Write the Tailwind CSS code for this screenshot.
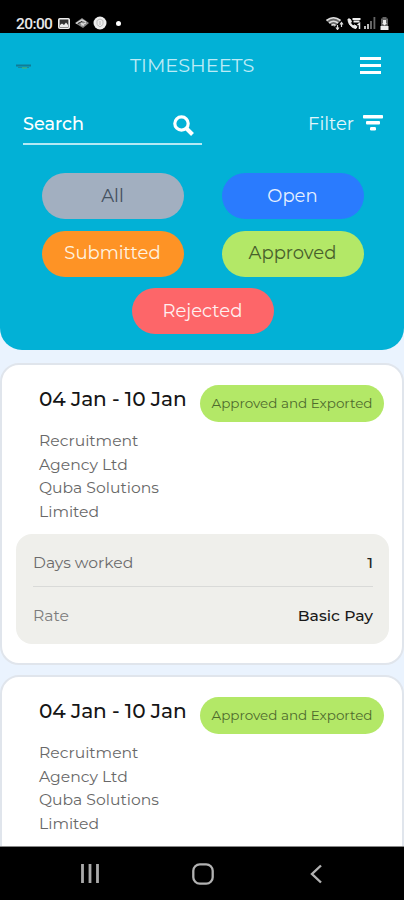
<!DOCTYPE html>
<html lang="en">
<head>
  <meta charset="UTF-8">
  <meta name="viewport" content="width=device-width, initial-scale=1.0">
  <title>Timesheets</title>
  <script src="https://cdn.jsdelivr.net/npm/@tailwindcss/browser@4"></script>
</head>
<body class="w-[404px] h-[900px] overflow-hidden flex flex-col bg-[#eaf3fe] font-['Montserrat','Inter',sans-serif]">

  <!-- Status bar -->
  <div class="h-[33px] shrink-0 bg-black text-[#e8e8e8] flex items-end justify-between pl-[16px] pr-[14px] pb-[2px]">
    <div class="flex items-center h-[16px]">
      <span class="w-[42px] mt-[2px] font-['Roboto',sans-serif] font-medium text-[15.500px] leading-[16px] tracking-[-0.6px]">20:00</span>
      <svg class="w-[12px] h-[11px]" viewBox="0 0 12 11"><rect x=".8" y=".8" width="10.400" height="9.400" rx="1" fill="#333" stroke="#eee" stroke-width="1.600"/><path d="M2 9V7l2-1.500L6 7l2-2.500L10 7v2z" fill="#eee"/></svg>
      <svg class="ml-[5px] w-[14px] h-[10px]" viewBox="0 0 14 10"><path d="M0 5 7 0 14 5 8 10z" fill="#888"/><path d="M1 5.500 7 2l4 2M5 4l4 3.500M6 7l5-2" fill="none" stroke="#ddd" stroke-width="1.200"/><path d="M3 5.500 7 3.500" stroke="#222"/></svg>
      <svg class="ml-[4px] w-[14px] h-[14px]" viewBox="0 0 14 14"><circle cx="7" cy="7" r="6.500" fill="#eee"/><path d="M4 4.500 7 3l3 1.500v4L7 11 4 8.500zM7 5v4" fill="none" stroke="#bbb"/></svg>
      <span class="ml-[9px] size-[5px] rounded-full bg-white"></span>
    </div>
    <div class="flex items-center h-[16px] pr-[1px]">
      <svg class="w-[18px] h-[14px]" viewBox="0 0 18 14" fill="none"><path d="M0 4.500Q7.500-2 15 4.500L8.500 11z" fill="#666"/><path d="M.5 4.500q7-5.500 14 0M3 7q4.500-3.500 9 0M5.500 9.500q2-2 4 0" stroke="#ddd" stroke-width="1.600"/><path d="M11.500 13.500V9m-1.500 2.500 1.500 2 1.500-2M15.500 11V6.500M14 8.500l1.500-2 1.500 2" stroke="#ddd" stroke-width="1.200"/></svg>
      <svg class="ml-[3px] w-[14px] h-[13px]" viewBox="0 0 14 13" fill="none" stroke="#eee"><path d="M1 2c0 5 3.500 9 8 9.500l1-2-2.500-1.500-1.500 1L3.500 6l1-1.500L3 2z" fill="#eee"/><path d="M5.500 2h8M6.500 4.500h6" stroke-width="1.800"/><path d="m10.500 8 2-1.500V12" stroke-width="1.500"/></svg>
      <svg class="ml-[3px] w-[12px] h-[12px]" viewBox="0 0 12 12" fill="#bbb"><path d="M0 9h2v3H0zM3 7h2v5H3z"/><path d="M6 4h2v8H6zM9.500 0h1.800v12H9.500z" fill="#666"/></svg>
      <svg class="ml-[4px] w-[9px] h-[13px]" viewBox="0 0 9 13"><path d="M2.500 0h4v1.500H8V9H1V1.500h1.500z" fill="#666"/><path d="M3 3h3v3h1L4.500 8.500 2 6h1zM.5 9h8v4h-8z" fill="#eee"/></svg>
    </div>
  </div>

  <!-- Header with search and status filters -->
  <header class="h-[317px] shrink-0 rounded-b-[22px] bg-[#02b1d6] text-white">
    <div class="h-[65px] pl-[15px] pr-[23px] flex items-center">
      <svg class="w-[18px] h-[8px]" viewBox="0 0 18 8"><path d="M1 2.500h15v2H1z" fill="#146f88" opacity=".8"/><path d="M3 5.500h11" stroke="#1b8a9c"/><path d="M7 6h5" stroke="#39b58b" stroke-width="1.500"/></svg>
      <h1 class="ml-[97px] text-[19.300px] text-[#bcebf6] whitespace-nowrap">TIMESHEETS</h1>
      <div class="ml-auto w-[21px] flex flex-col gap-[4px]">
        <span class="h-[3px] bg-white"></span>
        <span class="h-[3px] bg-white"></span>
        <span class="h-[3px] bg-white"></span>
      </div>
    </div>

    <div class="flex justify-between pl-[23px] pr-[21px]">
      <div class="w-[179px] h-[47px] flex items-center justify-between border-b-2 border-[#b5e9f4] pr-[8px]">
        <span class="mt-[7px] text-[17.600px] font-medium">Search</span>
        <svg class="mt-[9px] w-[21px] h-[21px]" viewBox="0 0 21 21" fill="none" stroke="#fff"><circle cx="8.500" cy="8.500" r="6.700" stroke-width="3.200"/><path d="m13.500 13.500 6 6" stroke-width="4"/></svg>
      </div>
      <div class="h-[47px] flex items-center gap-[9px] pt-[3px]">
        <span class="mt-[2px] text-[18px] text-[#e2f7fb]">Filter</span>
        <svg class="w-[20px] h-[16px]" viewBox="0 0 20 16" fill="#fff"><rect width="20" height="3.500" rx=".8"/><rect x="3" y="6" width="14" height="3.500" rx="1"/><rect x="7" y="12" width="6" height="3.500" rx="1.200"/></svg>
      </div>
    </div>

    <div class="mt-[28px] ml-px flex flex-wrap justify-center gap-x-[38px] gap-y-[11.500px] text-[18px]">
      <button class="w-[142px] h-[46px] rounded-full bg-[#a2afc0] text-[#455260]">All</button>
      <button class="w-[142px] h-[46px] rounded-full bg-[#2a7bfe] text-[#e6f0ff]">Open</button>
      <button class="w-[142px] h-[46px] rounded-full bg-[#fe9325] text-[#fff3e2]">Submitted</button>
      <button class="w-[142px] h-[46px] rounded-full bg-[#b3e867] text-[#48602b]">Approved</button>
      <button class="w-[142px] h-[46px] rounded-full bg-[#fd6669] text-[#fff0f0]">Rejected</button>
    </div>
  </header>

  <!-- Timesheet list -->
  <main class="mt-[13px] flex-1 min-h-0 overflow-hidden flex flex-col gap-[10px]">
    <section class="h-[302px] shrink-0 rounded-[19px] border-2 border-[#e0e5ec] bg-white pl-[14px] pr-[13px] pt-[20px]">
      <div class="flex justify-between pl-[23px] pr-[5px]">
        <h2 class="text-[20.100px] leading-[28px] font-medium tracking-[-0.100px] text-[#151515] whitespace-nowrap">04 Jan - 10 Jan</h2>
        <span class="w-[184px] h-[37px] rounded-full bg-[#b3e867] text-[#4e6a2d] text-[13.500px] flex items-center justify-center whitespace-nowrap">Approved and Exported</span>
      </div>
      <p class="mt-[7px] pl-[23px] w-[160px] text-[15.600px] leading-[23.700px] text-[#686868]">Recruitment<br>Agency Ltd<br>Quba Solutions<br>Limited</p>
      <div class="mt-[10px] h-[110px] rounded-[16px] bg-[#efefeb] pl-[17px] pr-[16px] text-[15.600px]">
        <div class="h-[53px] pt-[6px] flex items-center justify-between border-b border-[#d9dad8]">
          <span class="text-[#6b6b6b]">Days worked</span>
          <span class="text-[#222] font-medium">1</span>
        </div>
        <div class="h-[57px] pt-px flex items-center justify-between">
          <span class="text-[#7c7c7c]">Rate</span>
          <span class="text-[#191919] font-medium">Basic Pay</span>
        </div>
      </div>
    </section>

    <section class="h-[302px] shrink-0 rounded-[19px] border-2 border-[#e0e5ec] bg-white pl-[14px] pr-[13px] pt-[20px]">
      <div class="flex justify-between pl-[23px] pr-[5px]">
        <h2 class="text-[20.100px] leading-[28px] font-medium tracking-[-0.100px] text-[#151515] whitespace-nowrap">04 Jan - 10 Jan</h2>
        <span class="w-[184px] h-[37px] rounded-full bg-[#b3e867] text-[#4e6a2d] text-[13.500px] flex items-center justify-center whitespace-nowrap">Approved and Exported</span>
      </div>
      <p class="mt-[7px] pl-[23px] w-[160px] text-[15.600px] leading-[23.700px] text-[#686868]">Recruitment<br>Agency Ltd<br>Quba Solutions<br>Limited</p>
    </section>
  </main>

  <!-- Android navigation bar -->
  <nav class="h-[54px] shrink-0 border-t border-[#888] bg-black flex items-start pt-[16px] pl-[81px]">
    <svg class="mt-px w-[18px] h-[20px]" viewBox="0 0 18 20" stroke="#aaa" stroke-width="2.800"><path d="M1.500 0v19M9 0v19M16.500 0v19"/></svg>
    <svg class="ml-[93px] w-[22px] h-[22px]" viewBox="0 0 22 22" fill="none" stroke="#b2b2b2" stroke-width="2.300"><rect x="1.300" y="1.300" width="19.400" height="19.400" rx="6.500"/></svg>
    <svg class="ml-[96px] mt-px w-[12px] h-[20px]" viewBox="0 0 12 20" fill="none" stroke="#b2b2b2" stroke-width="2.400"><path d="m11 1.500-9 8.500 9 8.500"/></svg>
  </nav>
</body>
</html>
